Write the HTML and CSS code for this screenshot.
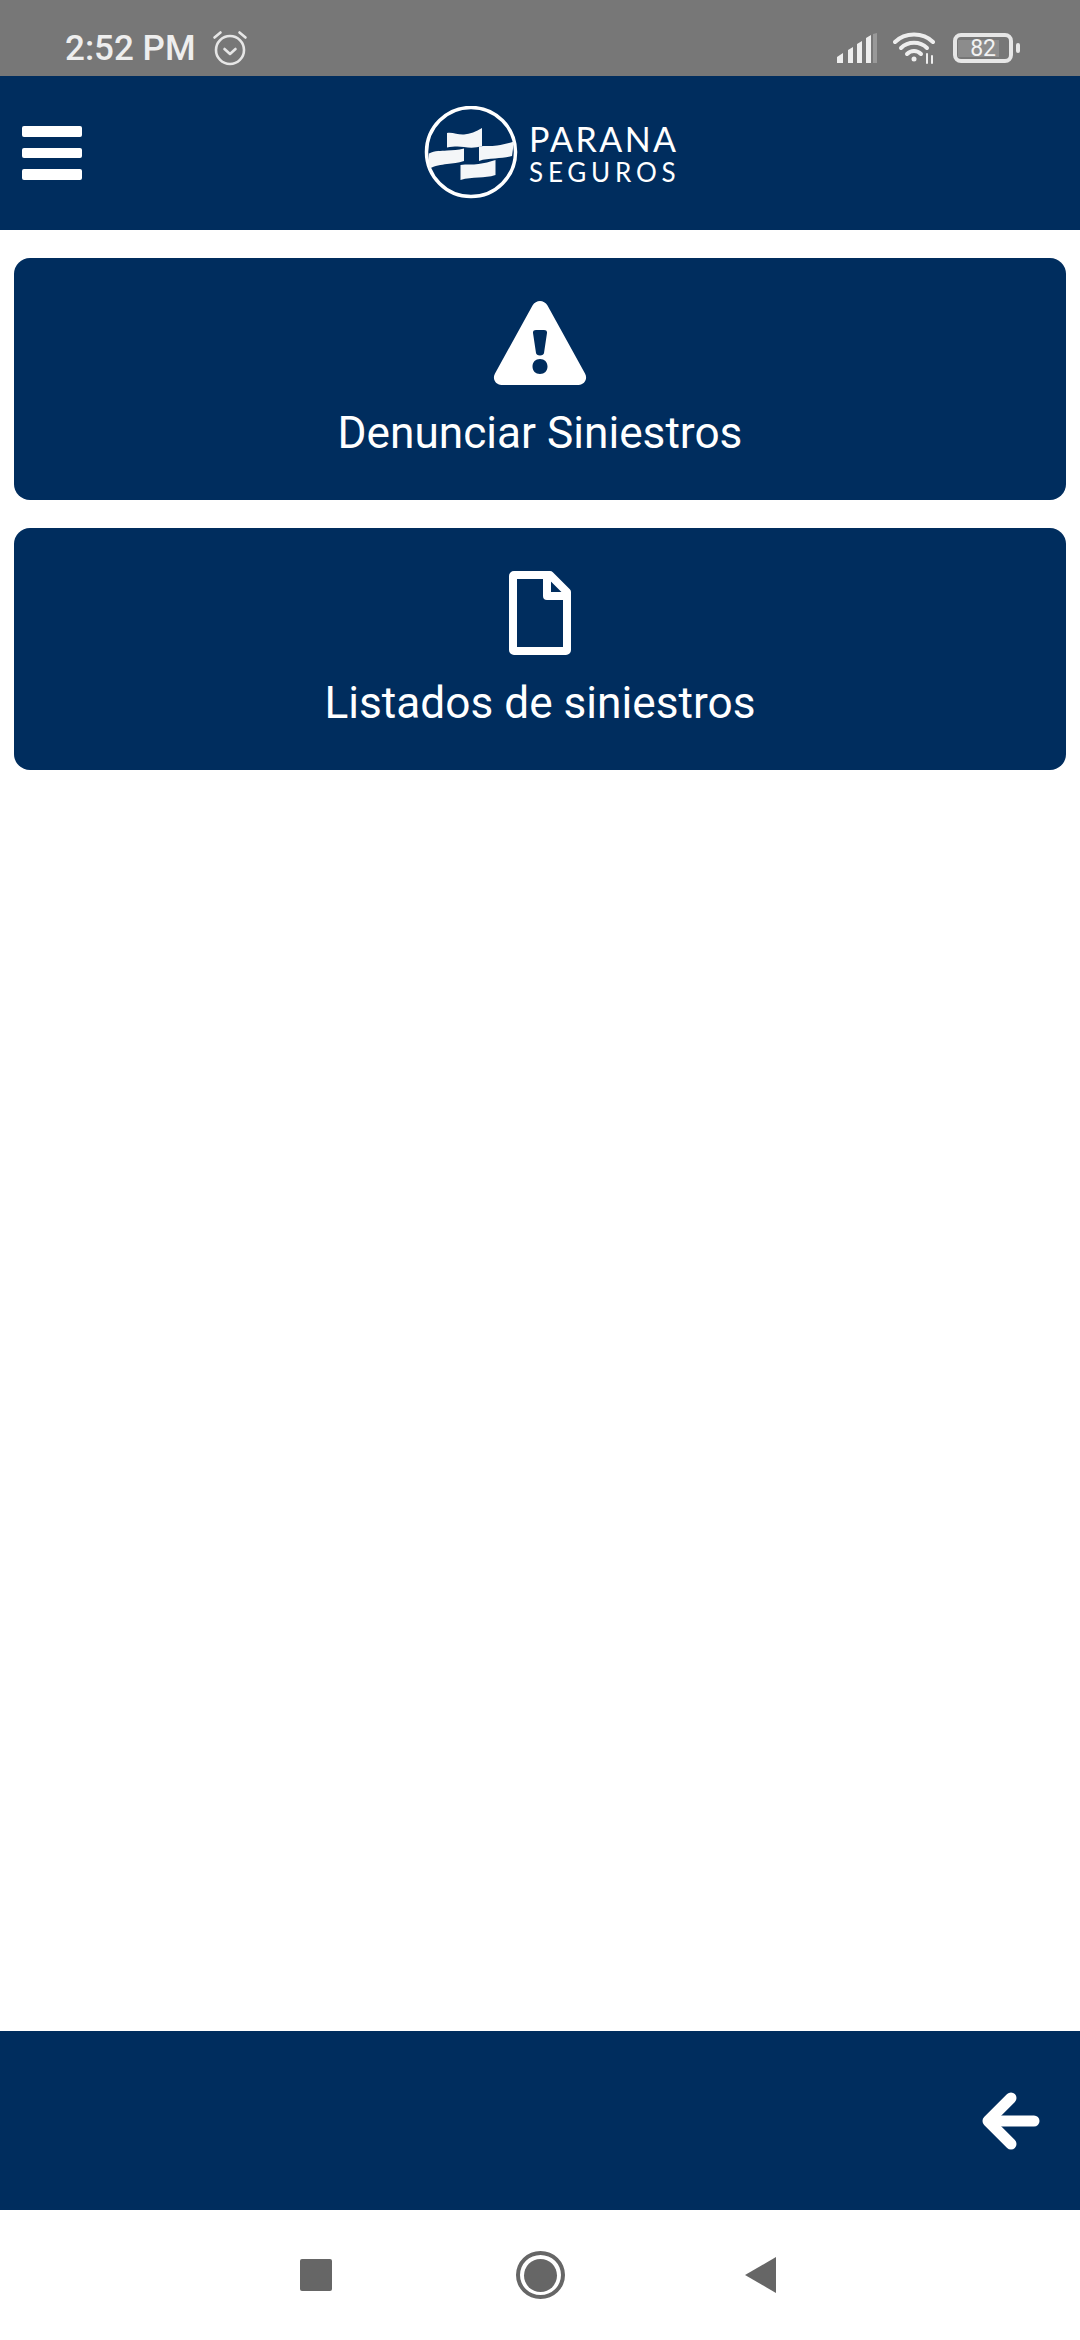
FILE: index.html
```html
<!DOCTYPE html>
<html lang="es">
<head>
  <meta charset="UTF-8">
  <meta name="viewport" content="width=device-width, initial-scale=1.0">
  <title>Parana Seguros - Siniestros</title>
  <link rel="stylesheet" href="styles.css">
</head>
<body>
  <div class="phone">
    <div class="status-bar">
      <span class="time">2:52 PM</span>
      <svg class="alarm-icon" width="36" height="36" viewBox="0 0 36 36" fill="none" stroke="#e6e6e6" stroke-width="2.6" stroke-linecap="round" stroke-linejoin="round">
        <circle cx="18" cy="20" r="14"/>
        <path d="M12.5 19l5.5 5 5.500-5"/>
        <path d="M2.500 7.500L8.500 2.500M33.500 7.500L27.500 2.500"/>
      </svg>
      <div class="status-right">
        <svg class="signal-icon" width="40" height="30" viewBox="0 0 40 30">
          <path fill="#eee" d="M0 24l6-4v10H0zM11 17l5-3v16h-5zM20 11l5-3v22h-5zM29 5l5-3v28h-5z"/>
          <path fill="#999" d="M36 1l4-1v30h-4z"/>
        </svg>
        <svg class="wifi-icon" width="44" height="32" viewBox="0 0 44 32" fill="none" stroke="#eee" stroke-width="4" stroke-linecap="round">
          <path d="M2 10C12 0 30 0 40 10"/>
          <path d="M8 16C15 9 27 9 34 16"/>
          <path d="M14 22C18 18 24 18 28 22"/>
          <circle cx="21" cy="27" r="2.500" fill="#eee" stroke="none"/>
          <path d="M34 22v9M39 24v7" stroke-width="2"/>
        </svg>
        <div class="battery">
          <div class="battery-body"><span class="battery-level">82</span></div>
          <div class="battery-nub"></div>
        </div>
      </div>
    </div>

    <div class="top-bar">
      <div class="menu-btn">
        <span></span>
        <span></span>
        <span></span>
      </div>
      <div class="logo">
        <svg width="94" height="94" viewBox="0 0 94 94">
          <circle cx="47" cy="46" r="44.500" fill="none" stroke="#fff" stroke-width="3.500"/>
          <path fill="#f4f6f8" d="M23 27c6-1 11 2 17 1.500s12-3 18-6.500v18c-6 2-12 2-18 1s-11-.500-17 .500z"/>
          <path fill="#f4f6f8" d="M5 47.500c6-3 12-2.500 18-3s11 0 17-2V55c-6 2-11 2-17 3s-12 1-18 5z"/>
          <path fill="#f4f6f8" d="M55 40.500c6-1 12 0 18-1s11-2 17-4l-2 14.500c-6 2-11 2-17 2.500s-11 .500-16 2.500z"/>
          <path fill="#f4f6f8" d="M36.500 59c6-1 12 0 18-1s11-2 17-4v15c-6 2-11 2-17 2.500s-12 .500-18 2.500z"/>
        </svg>
        <div class="logo-text">
          <span class="logo-name">PARANA</span>
          <span class="logo-sub">SEGUROS</span>
        </div>
      </div>
    </div>

    <div class="content">
      <a class="action-card" href="#">
        <svg class="card-icon" width="94" height="84" viewBox="0 0 94 84">
          <path fill="#fff" fill-rule="evenodd" d="M39.500 4.500c3.500-6 11.500-6 15 0l37.500 68c3 5.500-.500 11.500-6.500 11.500H8.500c-6 0-9.500-6-6.500-11.500zM40 32l3 20c.300 1.500 1.500 2.500 4 2.500s3.700-1 4-2.500l3-20c.300-2-1-3-3-3h-8c-2 0-3.300 1-3 3zM47 58c-4.500 0-7.500 3-7.500 7.500S42.500 73 47 73s7.500-3 7.500-7.500S51.500 58 47 58z"/>
        </svg>
        <span class="card-label">Denunciar Siniestros</span>
      </a>
      <a class="action-card" href="#">
        <svg class="card-icon" width="62" height="84" viewBox="0 0 62 84" fill="none" stroke="#fff" stroke-width="8" stroke-linejoin="round">
          <path d="M5 4h36l17 17v58a1 1 0 0 1-1 1H5a1 1 0 0 1-1-1V5a1 1 0 0 1 1-1z"/>
          <path d="M38 4v21h20"/>
        </svg>
        <span class="card-label">Listados de siniestros</span>
      </a>
    </div>

    <div class="bottom-bar">
      <svg class="back-arrow" width="58" height="58" viewBox="0 0 58 58" fill="none" stroke="#fff" stroke-width="11" stroke-linecap="round" stroke-linejoin="round">
        <path d="M29 6L6 29l23 23"/>
        <path d="M8 29h44"/>
      </svg>
    </div>

    <div class="nav-bar">
      <div class="nav-square"></div>
      <div class="nav-circle"><div class="nav-dot"></div></div>
      <svg width="31" height="36" viewBox="0 0 31 36">
        <path fill="#666" d="M0 18L31 0v36z"/>
      </svg>
    </div>
  </div>
</body>
</html>
```

FILE: styles.css
```css
* {
  box-sizing: border-box;
}
body {
  margin: 0;
  font-family: Roboto, 'Liberation Sans', sans-serif;
  background: #fff;
}
.phone {
  display: flex;
  flex-direction: column;
  width: 1080px;
  height: 2340px;
}
.status-bar {
  display: flex;
  align-items: center;
  height: 76px;
  padding: 20px 60px 0 65px;
  background: #777;
  color: #eee;
}
.time {
  font-size: 35px;
  font-weight: 500;
}
.alarm-icon {
  margin-left: 16px;
}
.status-right {
  display: flex;
  align-items: center;
  margin-left: auto;
  gap: 16px;
}
.battery {
  display: flex;
  align-items: center;
  gap: 3px;
}
.battery-body {
  display: flex;
  align-items: center;
  width: 60px;
  height: 30px;
  padding: 0 1px;
  border: 4px solid #e6e6e6;
  border-radius: 8px;
}
.battery-level {
  width: 41px;
  padding-right: 3px;
  text-align: right;
  background: #8c8c8c;
  color: #f2f2f2;
  font-size: 23px;
  line-height: 17px;
}
.battery-nub {
  width: 4px;
  height: 10px;
  border-radius: 2px;
  background: #e6e6e6;
}
.top-bar {
  display: flex;
  align-items: center;
  height: 154px;
  padding-left: 22px;
  background: #002d5e;
}
.menu-btn {
  display: flex;
  flex-direction: column;
  gap: 11px;
  width: 60px;
}
.menu-btn span {
  height: 10.500px;
  border-radius: 2px;
  background: #fff;
}
.logo {
  display: flex;
  align-items: center;
  margin-left: 342px;
  gap: 11px;
}
.logo-text {
  display: flex;
  flex-direction: column;
  color: #fff;
  font-family: Lato, 'Open Sans', sans-serif;
  line-height: 1;
}
.logo-name {
  font-size: 34px;
  letter-spacing: 2.400px;
}
.logo-sub {
  margin-top: 3px;
  font-size: 26px;
  letter-spacing: 4.800px;
}
.content {
  display: flex;
  flex-direction: column;
  flex: 1;
  gap: 28px;
  padding: 28px 14px;
}
.action-card {
  display: flex;
  flex-direction: column;
  align-items: center;
  height: 242px;
  padding-top: 43px;
  border-radius: 16px;
  background: #002d5e;
  color: #fff;
  text-decoration: none;
}
.card-label {
  margin-top: 22px;
  font-size: 44.200px;
  line-height: 52px;
}
.bottom-bar {
  display: flex;
  align-items: center;
  justify-content: flex-end;
  height: 179px;
  padding-right: 40px;
  background: #002d5e;
}
.nav-bar {
  display: flex;
  align-items: center;
  height: 130px;
  padding-left: 300px;
  background: #fff;
}
.nav-square {
  width: 32px;
  height: 32px;
  border-radius: 2px;
  background: #666;
}
.nav-circle {
  display: flex;
  align-items: center;
  justify-content: center;
  width: 49px;
  height: 48px;
  margin: 0 180px 0 184px;
  border: 4px solid #666;
  border-radius: 50%;
}
.nav-dot {
  width: 33px;
  height: 33px;
  border-radius: 50%;
  background: #666;
}
```
